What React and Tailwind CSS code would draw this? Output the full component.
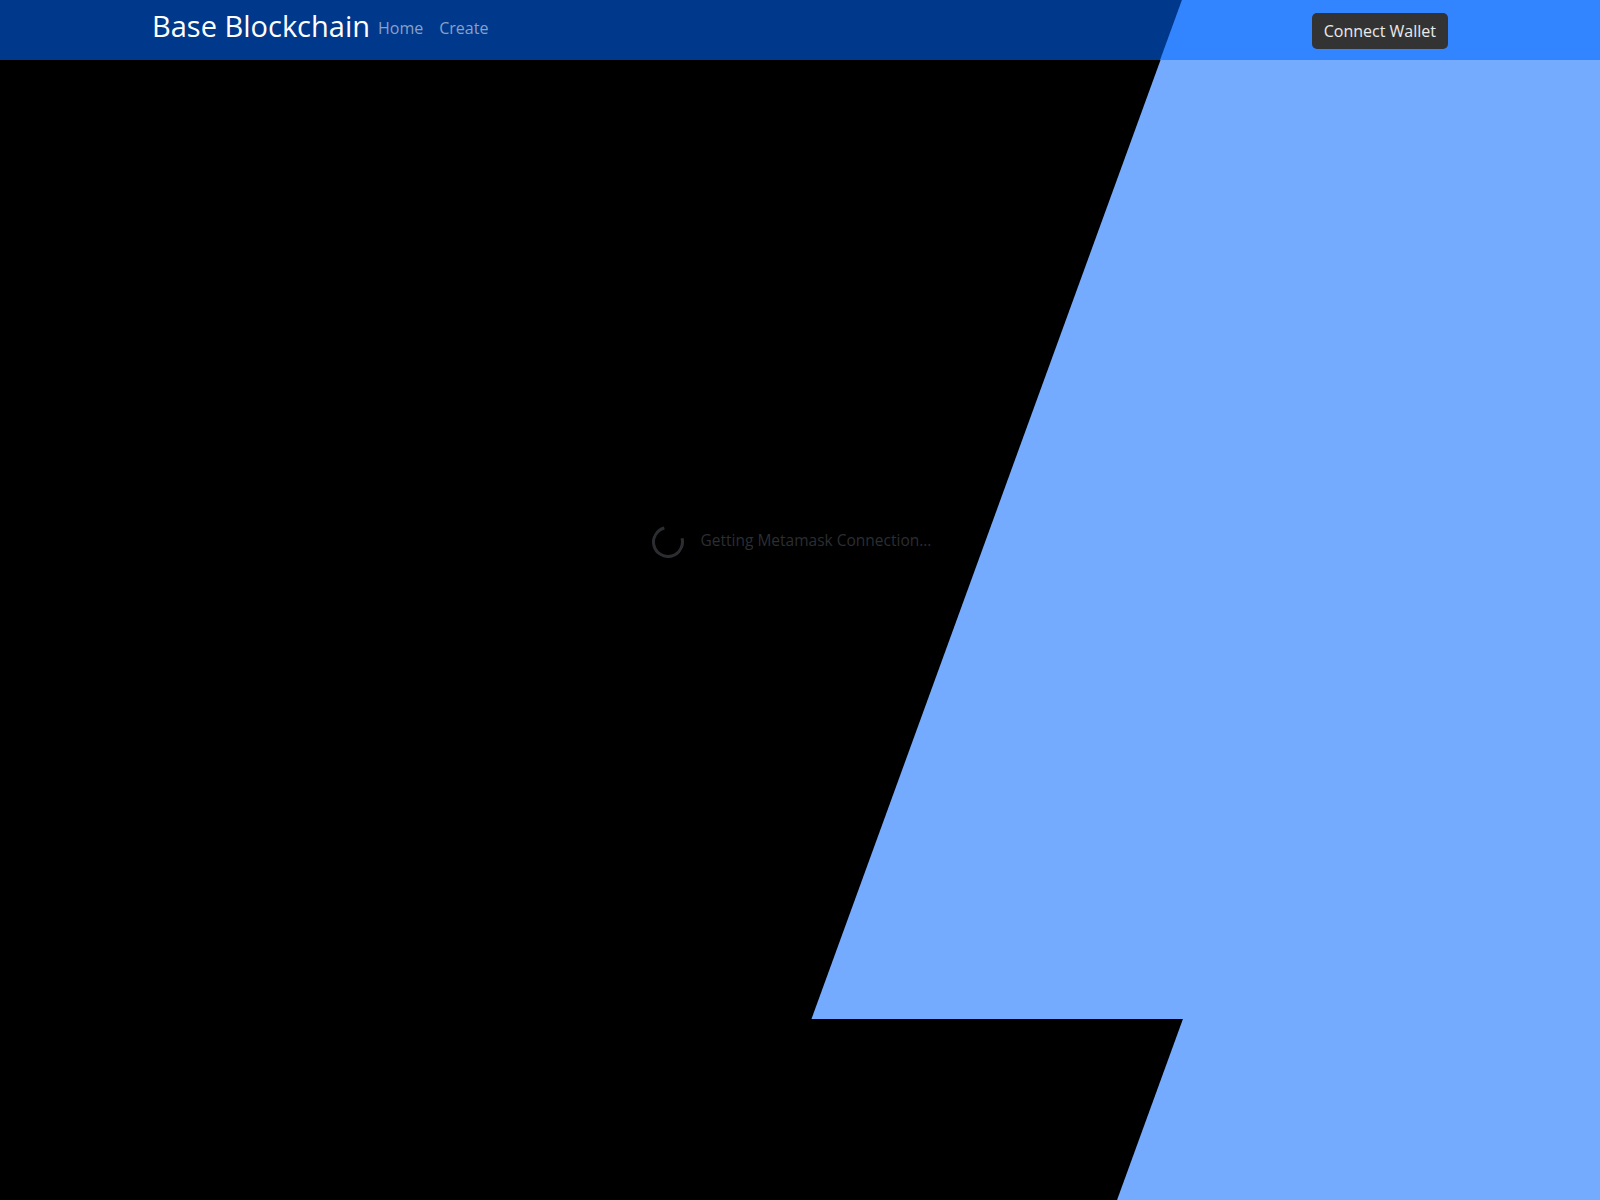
export default function App() {
  return (
    <div
      className="relative h-[1200px] w-full overflow-hidden bg-black"
      style={{ fontFamily: '"Open Sans", "Noto Sans", sans-serif' }}
    >
      {/* Background shapes */}
      <div className="absolute left-[986px] top-[60px] h-[959px] w-[1200px] origin-center -skew-x-[20deg] bg-[#74abff]" />
      <div className="absolute left-[1150px] top-[1019px] h-[181px] w-[1200px] origin-center -skew-x-[20deg] bg-[#74abff]" />

      {/* Navbar */}
      <nav className="relative z-10 h-[60px] overflow-hidden bg-[#00388c]">
        <div className="absolute left-[1171px] top-0 h-[60px] w-[1200px] origin-center -skew-x-[20deg] bg-[#3385ff]" />
        <div className="relative mx-auto flex h-full max-w-[1320px] items-center justify-between px-3">
          <div className="flex items-center">
            <a href="#" className="mr-2 pb-[10px] text-[29px] leading-none text-white">
              Base Blockchain
            </a>
            <div className="flex items-center gap-4 pb-[5px] text-[16px] text-[#8aa0c6]">
              <a href="#">Home</a>
              <a href="#">Create</a>
            </div>
          </div>
          <button className="mb-[-1px] h-[36px] rounded-[5px] bg-[#333333] px-3 pt-[1px] text-[16px] text-white/90">
            Connect Wallet
          </button>
        </div>
      </nav>

      {/* Loading */}
      <main className="relative z-10 flex items-center justify-center pr-[17px] pt-[466px]">
        <div className="mr-[17px] h-[32px] w-[32px] rotate-[30deg] rounded-full border-[3.5px] border-[#2b2d30] border-t-transparent" />
        <span className="pb-[3px] text-[15.5px] text-[#2b2e33]">Getting Metamask Connection...</span>
      </main>
    </div>
  )
}
